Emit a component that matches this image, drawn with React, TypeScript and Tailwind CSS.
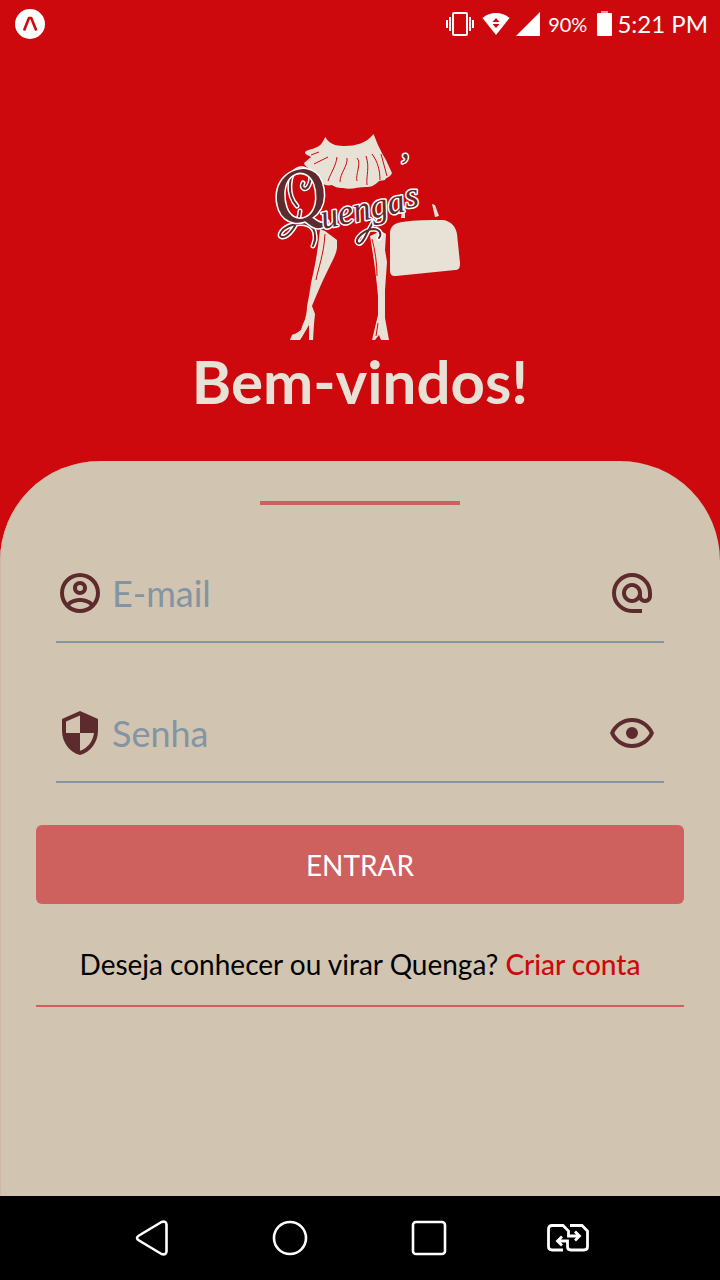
import { useState } from "react";

const paths = {
  account:
    "M12,2A10,10 0 0,0 2,12A10,10 0 0,0 12,22A10,10 0 0,0 22,12A10,10 0 0,0 12,2M7.07,18.28C7.5,17.38 10.12,16.5 12,16.5C13.88,16.5 16.5,17.38 16.93,18.28C15.57,19.36 13.86,20 12,20C10.14,20 8.43,19.36 7.07,18.28M18.36,16.83C16.93,15.09 13.46,14.5 12,14.5C10.54,14.5 7.07,15.09 5.64,16.83C4.62,15.5 4,13.82 4,12C4,7.59 7.59,4 12,4C16.41,4 20,7.59 20,12C20,13.82 19.38,15.5 18.36,16.83M12,6C10.06,6 8.5,7.56 8.5,9.5C8.5,11.44 10.06,13 12,13C13.94,13 15.5,11.44 15.5,9.5C15.5,7.56 13.94,6 12,6M12,11A1.5,1.5 0 0,1 10.5,9.5A1.5,1.5 0 0,1 12,8A1.5,1.5 0 0,1 13.5,9.5A1.5,1.5 0 0,1 12,11Z",
  shield:
    "M12,12H19C18.47,16.11 15.72,19.78 12,20.92V12H5V6.3L12,3.19M12,1L3,5V11C3,16.55 6.84,21.73 12,23C17.16,21.73 21,16.55 21,11V5L12,1Z",
  at: "M12,15C12.81,15 13.5,14.7 14.11,14.11C14.7,13.5 15,12.81 15,12C15,11.19 14.7,10.5 14.11,9.89C13.5,9.3 12.81,9 12,9C11.19,9 10.5,9.3 9.89,9.89C9.3,10.5 9,11.19 9,12C9,12.81 9.3,13.5 9.89,14.11C10.5,14.7 11.19,15 12,15M12,2C14.75,2 17.1,3 19.05,4.95C21,6.9 22,9.25 22,12V13.45C22,14.45 21.65,15.3 21,16C20.3,16.67 19.5,17 18.5,17C17.3,17 16.31,16.5 15.56,15.5C14.56,16.5 13.38,17 12,17C10.63,17 9.45,16.5 8.46,15.54C7.5,14.55 7,13.38 7,12C7,10.63 7.5,9.45 8.46,8.46C9.45,7.5 10.63,7 12,7C13.38,7 14.55,7.5 15.54,8.46C16.5,9.45 17,10.63 17,12V13.45C17,13.86 17.16,14.22 17.46,14.53C17.76,14.84 18.11,15 18.5,15C18.92,15 19.27,14.84 19.57,14.53C19.87,14.22 20,13.86 20,13.45V12C20,9.81 19.23,7.93 17.65,6.35C16.07,4.77 14.19,4 12,4C9.81,4 7.93,4.77 6.35,6.35C4.77,7.93 4,9.81 4,12C4,14.19 4.77,16.07 6.35,17.65C7.93,19.23 9.81,20 12,20H17V22H12C9.25,22 6.9,21 4.95,19.05C3,17.1 2,14.75 2,12C2,9.25 3,6.9 4.95,4.95C6.9,3 9.25,2 12,2Z",
  eye: "M12,9A3,3 0 0,1 15,12A3,3 0 0,1 12,15A3,3 0 0,1 9,12A3,3 0 0,1 12,9M12,4.5C17,4.5 21.27,7.61 23,12C21.27,16.39 17,19.5 12,19.5C7,19.5 2.73,16.39 1,12C2.73,7.61 7,4.5 12,4.5M3.18,12C4.83,15.36 8.24,17.5 12,17.5C15.76,17.5 19.17,15.36 20.82,12C19.17,8.64 15.76,6.5 12,6.5C8.24,6.5 4.83,8.64 3.18,12Z",
};

function Icon({ d }: { d: string }) {
  return (
    <svg viewBox="0 0 24 24" fill="currentColor" className="size-12 shrink-0" aria-hidden="true">
      <path d={d} />
    </svg>
  );
}

function StatusBar() {
  return (
    <header className="flex h-12 shrink-0 items-center justify-between pl-[15px] pr-3 text-white">
      <svg viewBox="0 0 30 30" className="size-[30px]" aria-hidden="true">
        <circle cx="15" cy="15" r="15" fill="currentColor" />
        <path d="M9 21.500 14 9h2.200L21.300 21.500" fill="none" stroke="#cd090d" strokeWidth="2.600" strokeLinejoin="round" />
      </svg>
      <div className="flex items-center text-2xl">
        <svg viewBox="0 0 28 24" className="h-6 w-7" fill="none" stroke="currentColor" strokeWidth="2" aria-hidden="true">
          <rect x="7" y="1" width="14" height="22" rx="1" />
          <path d="M4 5v14M1 8v8M24 5v14M27 8v8" />
        </svg>
        <svg viewBox="0 0 28 24" className="ml-2 h-6 w-7" aria-hidden="true">
          <path d="M.5 6C8 -.8 20 -.8 27.500 6L14 23Z" fill="currentColor" />
          <path d="M14 6l3.500 4h-7zM14 16l3.500-4h-7z" fill="#cd090d" />
        </svg>
        <svg viewBox="0 0 24 24" className="ml-1.5 mr-2 size-6" fill="currentColor" aria-hidden="true">
          <path d="M24 0v24H0z" />
        </svg>
        <span className="text-xl">90%</span>
        <svg viewBox="0 0 16 26" className="ml-2.5 mr-1 h-[26px] w-4" fill="currentColor" aria-hidden="true">
          <path d="M4 0h7v2H4z" opacity=".6" />
          <rect y="2" width="15" height="23" rx="1" />
        </svg>
        <span>5:21 PM</span>
      </div>
    </header>
  );
}

function Logo() {
  const skirt =
    "M325.300 137C330 146 340 146 345 146C355 146 367 143 373.500 134L378 145L383 155L386 160L392 173C390 178 386 177 385 180L379 181C374 186 371 187 366 187C358 187 351 190 343 188C337 188 335 187 332 185C324 187 320 182 318 175L308 168C306 166 304 165 304 163L311 157C308 155 305 155 305 152C309 148 317 150 322 143Z";
  const legs =
    "M320 229L325 231L337 240V248C336 256 330 265 326 274C321 284 317 294 312 306L315 314L314 324L313 340H309L309 325L302 337L300 340H290L292 335L301 330C303 322 307 318 307 306C309 297 310 290 311 283C315 266 318 250 320 229ZM370 236L381 231L386 234L385 250L387 262L385 290L385 318L389 340H381L379 335L375 340H372L378 315L378 296C376 273 373 254 370 236Z";
  const flourishes =
    "M297 206C286 194 289 174 297 170C306 166 314 175 309 185C306 192 300 188 303 183M300 211C299 224 288 238 282 237C277 236 282 228 292 225C304 221 315 225 315 236C316 240 314 243 313 246M376 217L367 233C363 242 359 246 357 242C356 238 364 230 373 229C380 229 382 234 379 238";
  return (
    <svg viewBox="260 130 200 212" className="h-[212px] w-[200px] overflow-visible" role="img" aria-label="Quenga's">
      <g fill="#e8e2d6">
        <path d={skirt} />
        <path d={legs} />
        <path d="M390 232C391 225 396 223 402 222C416 220 430 220 443 220C451 221 456 227 457 234L460 263C460 268 459 270 455 270L396 276C391 276 390 274 390 270Z" />
        <path d="M403 205l2 1v12h-4zM432 204l3 1 4 11-4 1z" />
      </g>
      <g fill="none" stroke="#cd090d" strokeWidth="1">
        <path d="M319 152l-8 3M328 157l-14 7M337 157c-1 9-6 15-9 24M347 158c1 8-7 15-7 24M357 158c5 5-2 17 0 23M366 156c4 12 0 19 1 29M372 154c6 8 8 17 8 26M381 154l6 22M325 234c-1 20-7 35-9 46M372 239c3 11 5 24 5 37M305 318l-6 13-5 3M378 323l-2 13" />
      </g>
      <g strokeLinecap="round" fill="none">
        <path d={flourishes} stroke="#fff" strokeWidth="5" />
        <path d={flourishes} stroke="#5d2a2d" strokeWidth="2" />
      </g>
      <g
        fontFamily="Liberation Serif, serif"
        fontStyle="italic"
        stroke="#fff"
        strokeWidth="3"
        strokeLinejoin="round"
        paintOrder="stroke"
        fill="#5d2a2d"
      >
        <text x="273" y="221" fontSize="76" transform="rotate(-20 300 200)">
          Q
        </text>
        <text x="323" y="229" fontSize="35" transform="rotate(-12 323 229)">
          uenga
        </text>
        <text x="397" y="178" fontSize="35">
          ’
        </text>
        <text x="406" y="208" fontSize="36" transform="rotate(-8 406 208)">
          s
        </text>
      </g>
    </svg>
  );
}

function SystemNav() {
  const button = "flex h-12 w-16 items-center justify-center";
  return (
    <nav className="flex h-[84px] shrink-0 items-center justify-center gap-[75px] bg-black pr-0.5 text-white">
      <button type="button" aria-label="Voltar" className={button}>
        <svg viewBox="0 0 36 36" className="size-9" fill="none" stroke="currentColor" strokeWidth="2.600" strokeLinejoin="round">
          <path d="M28.500 2 6 15.500q-4 2.500 0 5L28.500 34q4.500 1.500 5-2.500v-27q-.5-4-5-2.500Z" />
        </svg>
      </button>
      <button type="button" aria-label="Início" className={button}>
        <svg viewBox="0 0 36 36" className="size-9" fill="none" stroke="currentColor" strokeWidth="2.600">
          <circle cx="18" cy="18" r="16" />
        </svg>
      </button>
      <button type="button" aria-label="Recentes" className={button}>
        <svg viewBox="0 0 36 36" className="size-9" fill="none" stroke="currentColor" strokeWidth="2.600">
          <rect x="2" y="2" width="32" height="32" rx="3" />
        </svg>
      </button>
      <button type="button" aria-label="Alternar" className={button}>
        <svg viewBox="0 0 42 28" className="h-7 w-[42px]" fill="none" stroke="currentColor" strokeWidth="2.800">
          <path d="M16 26H5q-3.500 0-3.500-3.500V5Q1.500 1.500 5 1.500h11l5.500 5.500v5H32M28 7.500l4.500 4.500-4.500 4.500M23 1.500h12l5.500 5.500v15.500Q40.500 26 37 26H24q-3.500 0-3.500-3.500V17H10M15 12.500 10.500 17l4.500 4.500" />
        </svg>
      </button>
    </nav>
  );
}

export default function App() {
  const [visible, setVisible] = useState(false);
  const row = "mx-5 flex items-center border-b-2 border-[#8395a3] pr-2 pb-6 text-[#5d2a2d]";
  const input =
    "ml-2 min-w-0 flex-1 bg-transparent text-4xl text-black outline-none placeholder:text-[#8395a3]";
  return (
    <div className="flex min-h-screen flex-col bg-[#cd090d] font-[Lato,sans-serif]">
      <StatusBar />
      <div className="flex flex-col items-center pt-[82px] pb-[46px]">
        <Logo />
        <h1 className="mt-1.5 text-6xl/[67px] font-bold text-[#e8e2d6]">Bem-vindos!</h1>
      </div>
      <main className="flex flex-1 flex-col rounded-t-[100px] bg-[#d1c4b0] px-9 pt-10 shadow-[inset_1px_0_#d4b6a5]">
        <div className="h-1 w-[200px] self-center bg-[#ce605e]" />
        <form className="mt-16 flex flex-col" onSubmit={(e) => e.preventDefault()}>
          <div className={row}>
            <Icon d={paths.account} />
            <input type="email" aria-label="E-mail" placeholder="E-mail" className={input} />
            <Icon d={paths.at} />
          </div>
          <div className={row + " mt-[66px]"}>
            <Icon d={paths.shield} />
            <input type={visible ? "text" : "password"} aria-label="Senha" placeholder="Senha" className={input} />
            <button type="button" aria-label="Mostrar senha" onClick={() => setVisible(!visible)}>
              <Icon d={paths.eye} />
            </button>
          </div>
          <button type="submit" className="mt-[42px] h-[79px] rounded-md bg-[#ce605e] text-[28px] text-white">
            ENTRAR
          </button>
        </form>
        <p className="mt-10 border-b-2 border-[#ce605e] pb-5 text-center text-[28px]/[41px] text-black">
          Deseja conhecer ou virar Quenga?{" "}
          <a href="#criar-conta" className="font-medium text-[#cd090d]">
            Criar conta
          </a>
        </p>
      </main>
      <SystemNav />
    </div>
  );
}
